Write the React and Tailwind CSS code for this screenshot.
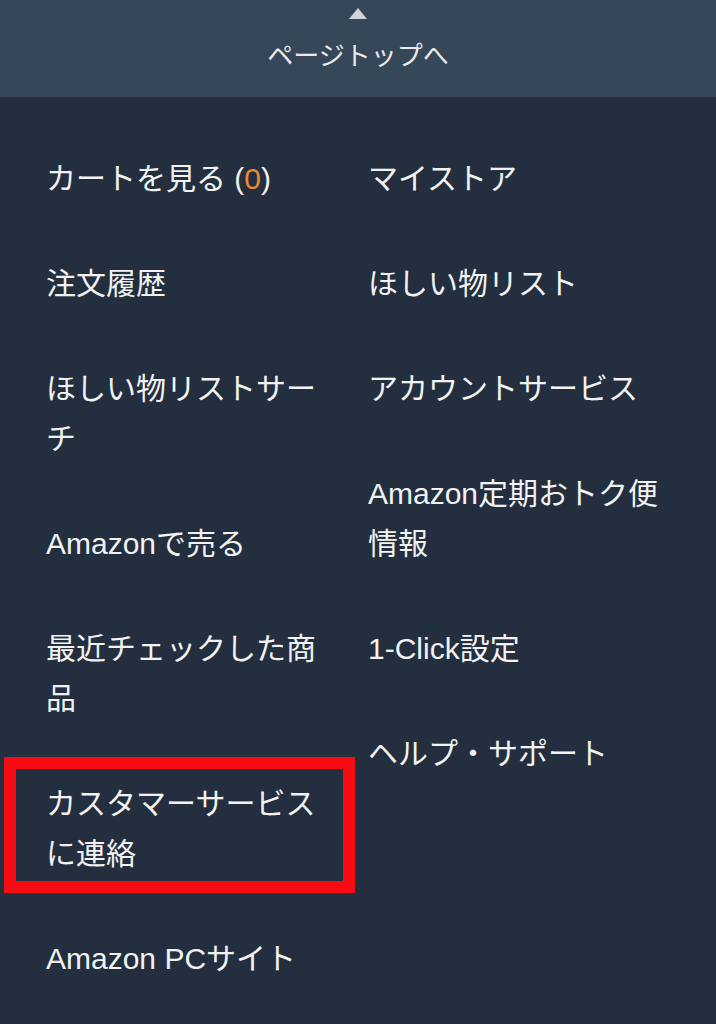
const leftItems = [
  { label: "カートを見る", count: "0" },
  { label: "注文履歴" },
  { label: "ほしい物リストサーチ" },
  { label: "Amazonで売る" },
  { label: "最近チェックした商品" },
  { label: "カスタマーサービスに連絡", marked: true },
  { label: "Amazon PCサイト" },
];

const rightItems = [
  { label: "マイストア" },
  { label: "ほしい物リスト" },
  { label: "アカウントサービス" },
  { label: "Amazon定期おトク便情報" },
  { label: "1-Click設定" },
  { label: "ヘルプ・サポート" },
];

const FooterLink = ({ label, count, marked }) => {
  return (
    <li className="relative py-[27.5px] leading-[50px]">
      <a href="#" className="text-[#f2f2f2]">
        {label}
        {count !== undefined && (
          <>
            {" ("}
            <span className="text-[#e98b2e]">{count}</span>
            {")"}
          </>
        )}
      </a>

      {/* annotation box drawn over the item */}
      {marked && (
        <div className="absolute top-[6px] bottom-[13px] left-[-42px] right-[-15px] border-[12px] border-[#f80a12] pointer-events-none" />
      )}
    </li>
  );
};

export default function App() {
  return (
    <div
      className="w-full min-h-screen bg-[#232f3e]"
      style={{ fontFamily: '"Liberation Sans", "Noto Sans CJK JP", sans-serif' }}
    >
      {/* ===== BACK TO TOP ===== */}
      <a
        href="#"
        className="flex flex-col items-center h-[97px] bg-[#37475a] text-[#eaeaea]"
      >
        <svg width="18" height="11" viewBox="0 0 18 11" className="mt-[8px]">
          <polygon points="9,0 18,11 0,11" fill="#d0d3d8" />
        </svg>
        <span className="mt-[19px] text-[26px] leading-[36px]">ページトップへ</span>
      </a>

      {/* ===== LINK COLUMNS ===== */}
      <div className="flex pt-[29px] pl-[46px] text-[30px]">
        <ul className="w-[322px] pr-[28px]">
          {leftItems.map((item) => (
            <FooterLink key={item.label} {...item} />
          ))}
        </ul>
        <ul className="flex-1 pr-[40px]">
          {rightItems.map((item) => (
            <FooterLink key={item.label} {...item} />
          ))}
        </ul>
      </div>
    </div>
  );
}
